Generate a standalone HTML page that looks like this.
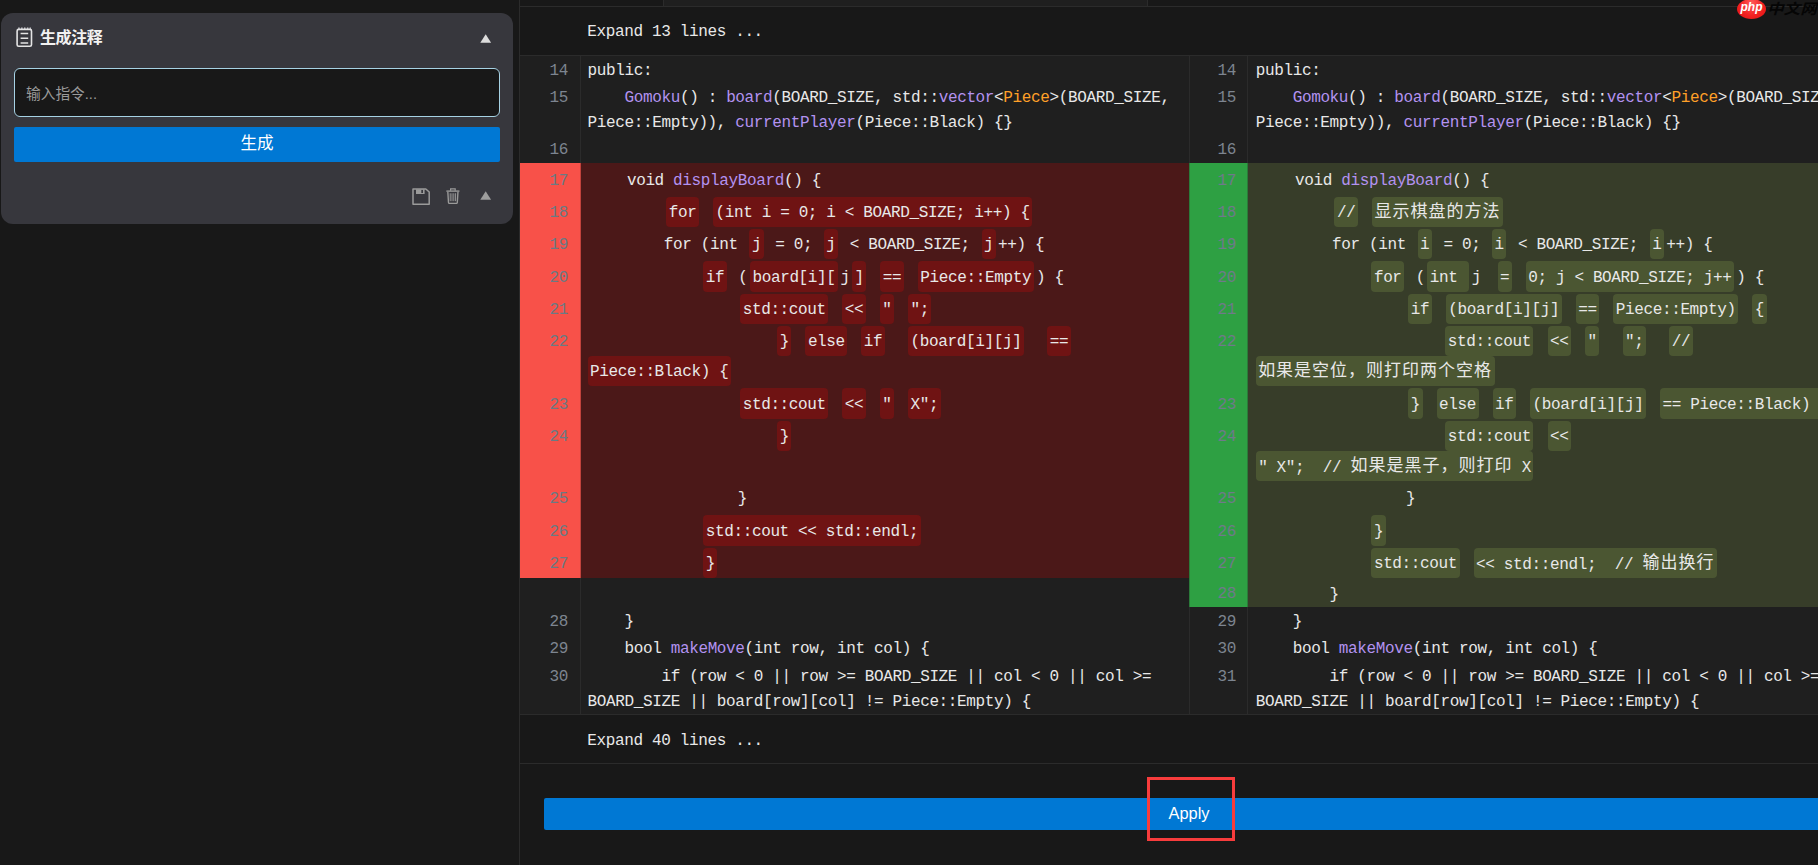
<!DOCTYPE html>
<html lang="zh-CN"><head><meta charset="utf-8"><title>diff</title>
<style>
html,body{margin:0;padding:0}
body{width:1818px;height:865px;overflow:hidden;position:relative;background:#181818;
 font-family:"Liberation Sans","Noto Sans CJK SC",sans-serif;color:#e6e6e6}
.abs{position:absolute}
/* ---------- sidebar card */
#card{position:absolute;left:1px;top:13px;width:512px;height:211px;background:#37373d;border-radius:12px}
#title{position:absolute;left:39px;top:13px;font-size:16px;line-height:24px;font-weight:bold;color:#f2f2f2;
 letter-spacing:-0.4px}
#inp{position:absolute;left:14px;top:68px;width:484px;height:47px;border:1px solid #a6d2e4;border-radius:6px;background:#181818}
#ph{position:absolute;left:26px;top:82px;font-size:14.7px;line-height:22px;color:#9a9a9a}
#gen{position:absolute;left:14px;top:127px;width:486px;height:35px;background:#0078d4;border-radius:2px;
 color:#fff;font-size:16.6px;line-height:34px;text-align:center}
/* ---------- diff */
#diff{position:absolute;left:519px;top:0;width:1338px;height:865px;border-left:1px solid #2b2b2b;
 font-family:"Liberation Mono","Noto Sans CJK SC",monospace;font-size:16.0px;letter-spacing:-0.3616px;color:#e8e8e8}
#topstrip{position:absolute;left:0;top:0;width:1338px;height:6px;border-bottom:1px solid #2b2b2b}
#topstrip i{position:absolute;left:143px;top:0;width:483px;height:6px;background:#1f1f1f;
 border-left:1px solid #2b2b2b;border-right:1px solid #2b2b2b}
.exp{position:absolute;left:0;width:1338px;white-space:pre}
.exp span{position:absolute;left:67.3px;line-height:25.2px}
#code{position:absolute;left:0;top:55px;width:1338px;border-top:1px solid #2b2b2b;border-bottom:1px solid #2b2b2b;background:#1f1f1f}
.row{position:relative;width:1338px}
.n,.vl:first-child{margin-top:var(--dy,0px)}
.g{position:absolute;top:0;height:100%;box-sizing:border-box;text-align:right;color:#7d8590}
.g.L{left:0;width:60.5px;border-right:1px solid #2b2b2b}
.g.R{left:668.6px;width:59.8px;border-left:1px solid #2b2b2b;border-right:1px solid #2b2b2b}
.g.gr{background:#f85149;border-color:#c2423c}
.g.ga{background:#2ea043;border-color:#2b7a3a}
.g.gr .n{color:#6a7a84}
.g.ga .n{color:#6e7a8a}
.n{position:absolute;right:11.5px;top:2.9px;line-height:25.2px;white-space:pre}
.n.np{top:6.225px}
.t{position:absolute;top:0;height:100%;box-sizing:border-box;padding-top:1px;white-space:pre;overflow:hidden}
.t.L{left:61px;width:607.5px;padding-left:6.5px}
.t.R{left:728.4px;width:609.6px;padding-left:7.3px}
.t.tr{background:#4b1818;padding-top:1.75px}
.t.ta{background:#373d29;padding-top:1.75px}
.vl{height:25.2px;line-height:25.2px;position:relative}
.vl:not(.pl){top:1.9px}
.vl.pl{height:30.25px;line-height:25.2px}
.c{display:inline-block;vertical-align:top;height:25.775px;padding:4.475px 2.44px 0.000px 2.44px;border-radius:4px}
.c.r{background:#6f1313}
.c.a{background:#4b5632}
.p{color:#b392f0}
.o{color:#ffa028}
.cj{font-size:17.0px;letter-spacing:1.0px;position:relative;top:-1px}
#applybar{position:absolute;left:24px;top:798px;width:1290px;height:32px;background:#0078d4;border-radius:2px;
 font-family:"Liberation Sans",sans-serif;font-size:16.4px;letter-spacing:0;line-height:31px;text-align:center;color:#fff}
#redbox{position:absolute;left:1147px;top:777px;width:82px;height:58px;border:3px solid #f73c3c}
</style></head>
<body>
<div id="card">
 <svg class="abs" style="left:15px;top:14px" width="18" height="21" viewBox="0 0 18 21">
  <rect x="1.1" y="2.4" width="14.4" height="16.9" rx="1.6" fill="none" stroke="#e4e4e4" stroke-width="1.6"/>
  <path d="M4.6 6.4h7.6M4.6 11.2h7.6M4.6 15.9h7.6" stroke="#e4e4e4" stroke-width="1.5"/>
  <path d="M2.2 1.2h1.5M5.1 1.2h1.5M8 1.2h1.5M10.9 1.2h1.5M13.6 1.2h1.3" stroke="#cfcfd4" stroke-width="1.4"/>
 </svg>
 <div id="title">生成注释</div>
 <svg class="abs" style="left:479px;top:21px" width="12" height="9" viewBox="0 0 12 9"><path d="M0.3 8.7L5.7 0.2L11.1 8.7Z" fill="#dcdcdc"/></svg>
 <div id="inp" style="left:13px;top:55px"></div>
 <div id="ph" style="left:25px;top:70px">输入指令...</div>
 <div id="gen" style="left:13px;top:114px">生成</div>
 <svg class="abs" style="left:411px;top:174.5px" width="19" height="17.4" viewBox="0 0 19 18" preserveAspectRatio="none">
  <path d="M1 1h12.8L17.2 4.2V16.8H1Z" fill="none" stroke="#9a9a9a" stroke-width="1.5" stroke-linejoin="round"/>
  <path d="M4 1.3h8.6v4.9H4Z" fill="#9a9a9a"/><rect x="9.3" y="2" width="1.7" height="3.2" fill="#37373d"/>
 </svg>
 <svg class="abs" style="left:444.8px;top:174.8px" width="13.8" height="16" viewBox="0 0 15 17" preserveAspectRatio="none">
  <path d="M0.4 3.3h14.2" stroke="#9a9a9a" stroke-width="1.5"/>
  <path d="M5 2.8V0.9h5V2.8" fill="none" stroke="#9a9a9a" stroke-width="1.3"/>
  <path d="M2 4.2l0.7 11.2q0.1 0.9 1 0.9h7.6q0.9 0 1-0.9L13 4.2" fill="none" stroke="#9a9a9a" stroke-width="1.5"/>
  <path d="M4.6 5.6v8.4M6.55 5.6v8.4M8.5 5.6v8.4M10.4 5.6v8.4" stroke="#9a9a9a" stroke-width="1"/>
 </svg>
 <svg class="abs" style="left:479px;top:178px" width="12" height="9" viewBox="0 0 12 9"><path d="M0.3 8.7L5.7 0.2L11.1 8.7Z" fill="#9d9d9d"/></svg>
</div>

<div id="diff">
 <div id="topstrip"><i></i></div>
 <div class="exp" style="top:7px;height:48px"><span style="top:13.4px">Expand 13 lines ...</span></div>
 <div id="code">
<div class="row" style="height:27.2px"><div class="g L"><span class="n">14</span></div><div class="t L"><div class="vl">public:</div></div><div class="g R"><span class="n">14</span></div><div class="t R"><div class="vl">public:</div></div></div>
<div class="row" style="height:52.4px"><div class="g L"><span class="n">15</span></div><div class="t L"><div class="vl">    <span class="p">Gomoku</span>() : <span class="p">board</span>(BOARD_SIZE, std::<span class="p">vector</span>&lt;<span class="o">Piece</span>&gt;(BOARD_SIZE,</div><div class="vl">Piece::Empty)), <span class="p">currentPlayer</span>(Piece::Black) {}</div></div><div class="g R"><span class="n">15</span></div><div class="t R"><div class="vl">    <span class="p">Gomoku</span>() : <span class="p">board</span>(BOARD_SIZE, std::<span class="p">vector</span>&lt;<span class="o">Piece</span>&gt;(BOARD_SIZE,</div><div class="vl">Piece::Empty)), <span class="p">currentPlayer</span>(Piece::Black) {}</div></div></div>
<div class="row" style="height:27.2px"><div class="g L"><span class="n">16</span></div><div class="t L"><div class="vl"></div></div><div class="g R"><span class="n">16</span></div><div class="t R"><div class="vl"></div></div></div>
<div class="row" style="height:32.25px"><div class="g L gr"><span class="n np">17</span></div><div class="t L tr"><div class="vl pl"><span class="c">    void <span class="p">displayBoard</span>() {</span></div></div><div class="g R ga"><span class="n np">17</span></div><div class="t R ta"><div class="vl pl"><span class="c">    void <span class="p">displayBoard</span>() {</span></div></div></div>
<div class="row" style="height:32.25px"><div class="g L gr"><span class="n np">18</span></div><div class="t L tr"><div class="vl pl"><span class="c">        </span><span class="c r">for</span><span class="c"> </span><span class="c r">(int i = 0; i &lt; BOARD_SIZE; i++) {</span></div></div><div class="g R ga"><span class="n np">18</span></div><div class="t R ta"><div class="vl pl"><span class="c">        </span><span class="c a">//</span><span class="c"> </span><span class="c a"><span class="cj">显示棋盘的方法</span></span></div></div></div>
<div class="row" style="height:32.25px"><div class="g L gr"><span class="n np">19</span></div><div class="t L tr"><div class="vl pl"><span class="c">        for (int </span><span class="c r">j</span><span class="c"> = 0; </span><span class="c r">j</span><span class="c"> &lt; BOARD_SIZE; </span><span class="c r">j</span><span class="c">++) {</span></div></div><div class="g R ga"><span class="n np">19</span></div><div class="t R ta"><div class="vl pl"><span class="c">        for (int </span><span class="c a">i</span><span class="c"> = 0; </span><span class="c a">i</span><span class="c"> &lt; BOARD_SIZE; </span><span class="c a">i</span><span class="c">++) {</span></div></div></div>
<div class="row" style="height:32.25px"><div class="g L gr"><span class="n np">20</span></div><div class="t L tr"><div class="vl pl"><span class="c">            </span><span class="c r">if</span><span class="c"> (</span><span class="c r">board[i][</span><span class="c">j</span><span class="c r">]</span><span class="c"> </span><span class="c r">==</span><span class="c"> </span><span class="c r">Piece::Empty</span><span class="c">) {</span></div></div><div class="g R ga"><span class="n np">20</span></div><div class="t R ta"><div class="vl pl"><span class="c">            </span><span class="c a">for</span><span class="c"> (</span><span class="c a">int </span><span class="c">j</span><span class="c"> </span><span class="c a">=</span><span class="c"> </span><span class="c a">0; j &lt; BOARD_SIZE; j++</span><span class="c">) {</span></div></div></div>
<div class="row" style="height:32.25px"><div class="g L gr"><span class="n np">21</span></div><div class="t L tr"><div class="vl pl"><span class="c">                </span><span class="c r">std::cout</span><span class="c"> </span><span class="c r">&lt;&lt;</span><span class="c"> </span><span class="c r">"</span><span class="c"> </span><span class="c r">";</span></div></div><div class="g R ga"><span class="n np">21</span></div><div class="t R ta"><div class="vl pl"><span class="c">                </span><span class="c a">if</span><span class="c"> </span><span class="c a">(board[i][j]</span><span class="c"> </span><span class="c a">==</span><span class="c"> </span><span class="c a">Piece::Empty)</span><span class="c"> </span><span class="c a">{</span></div></div></div>
<div class="row" style="height:62.5px"><div class="g L gr"><span class="n np">22</span></div><div class="t L tr"><div class="vl pl"><span class="c">                    </span><span class="c r">}</span><span class="c"> </span><span class="c r">else</span><span class="c"> </span><span class="c r">if</span><span class="c">  </span><span class="c r">(board[i][j]</span><span class="c">  </span><span class="c r">==</span><span class="c"> </span></div><div class="vl pl"><span class="c r">Piece::Black) {</span></div></div><div class="g R ga"><span class="n np">22</span></div><div class="t R ta"><div class="vl pl"><span class="c">                    </span><span class="c a">std::cout</span><span class="c"> </span><span class="c a">&lt;&lt;</span><span class="c"> </span><span class="c a">"</span><span class="c">  </span><span class="c a">";</span><span class="c">  </span><span class="c a">//</span><span class="c"> </span></div><div class="vl pl"><span class="c a"><span class="cj">如果是空位，则打印两个空格</span></span></div></div></div>
<div class="row" style="height:32.25px"><div class="g L gr"><span class="n np">23</span></div><div class="t L tr"><div class="vl pl"><span class="c">                </span><span class="c r">std::cout</span><span class="c"> </span><span class="c r">&lt;&lt;</span><span class="c"> </span><span class="c r">"</span><span class="c"> </span><span class="c r">X";</span></div></div><div class="g R ga"><span class="n np">23</span></div><div class="t R ta"><div class="vl pl"><span class="c">                </span><span class="c a">}</span><span class="c"> </span><span class="c a">else</span><span class="c"> </span><span class="c a">if</span><span class="c"> </span><span class="c a">(board[i][j]</span><span class="c"> </span><span class="c a">== Piece::Black) {</span></div></div></div>
<div class="row" style="height:62.5px"><div class="g L gr"><span class="n np">24</span></div><div class="t L tr"><div class="vl pl"><span class="c">                    </span><span class="c r">}</span></div><div class="vl pl"></div></div><div class="g R ga"><span class="n np">24</span></div><div class="t R ta"><div class="vl pl"><span class="c">                    </span><span class="c a">std::cout</span><span class="c"> </span><span class="c a">&lt;&lt;</span><span class="c"> </span></div><div class="vl pl"><span class="c a">" X";  // <span class="cj">如果是黑子，则打印</span> X</span></div></div></div>
<div class="row" style="height:32.25px"><div class="g L gr"><span class="n np">25</span></div><div class="t L tr"><div class="vl pl"><span class="c">                }</span></div></div><div class="g R ga"><span class="n np">25</span></div><div class="t R ta"><div class="vl pl"><span class="c">                }</span></div></div></div>
<div class="row" style="height:32.25px"><div class="g L gr"><span class="n np">26</span></div><div class="t L tr"><div class="vl pl"><span class="c">            </span><span class="c r">std::cout &lt;&lt; std::endl;</span></div></div><div class="g R ga"><span class="n np">26</span></div><div class="t R ta"><div class="vl pl"><span class="c">            </span><span class="c a">}</span></div></div></div>
<div class="row" style="height:32.25px"><div class="g L gr"><span class="n np">27</span></div><div class="t L tr"><div class="vl pl"><span class="c">            </span><span class="c r">}</span></div></div><div class="g R ga"><span class="n np">27</span></div><div class="t R ta"><div class="vl pl"><span class="c">            </span><span class="c a">std::cout</span><span class="c"> </span><span class="c a">&lt;&lt; std::endl;  // <span class="cj">输出换行</span></span></div></div></div>
<div class="row" style="height:28.75px;--dy:1px"><div class="g L"><span class="n"></span></div><div class="t L"></div><div class="g R ga"><span class="n">28</span></div><div class="t R ta"><div class="vl">        }</div></div></div>
<div class="row" style="height:27.2px"><div class="g L"><span class="n">28</span></div><div class="t L"><div class="vl">    }</div></div><div class="g R"><span class="n">29</span></div><div class="t R"><div class="vl">    }</div></div></div>
<div class="row" style="height:27.2px"><div class="g L"><span class="n">29</span></div><div class="t L"><div class="vl">    bool <span class="p">makeMove</span>(int row, int col) {</div></div><div class="g R"><span class="n">30</span></div><div class="t R"><div class="vl">    bool <span class="p">makeMove</span>(int row, int col) {</div></div></div>
<div class="row" style="height:52.4px;--dy:0.7px"><div class="g L"><span class="n">30</span></div><div class="t L"><div class="vl">        if (row &lt; 0 || row &gt;= BOARD_SIZE || col &lt; 0 || col &gt;=</div><div class="vl">BOARD_SIZE || board[row][col] != Piece::Empty) {</div></div><div class="g R"><span class="n">31</span></div><div class="t R"><div class="vl">        if (row &lt; 0 || row &gt;= BOARD_SIZE || col &lt; 0 || col &gt;=</div><div class="vl">BOARD_SIZE || board[row][col] != Piece::Empty) {</div></div></div>
 </div>
 <div class="exp" style="top:716px;height:47px;border-bottom:1px solid #2b2b2b"><span style="top:13.4px">Expand 40 lines ...</span></div>
 <div id="applybar">Apply</div>
</div>
<div id="redbox"></div>

<!-- watermark -->
<div class="abs" style="left:1737px;top:-1px;width:29px;height:20px;border-radius:50%;
 background:radial-gradient(ellipse at 50% 20%,#ff5a5a 0%,#f22222 55%,#e01010 100%)"></div>
<div class="abs" style="left:1739.5px;top:-3px;width:24px;font:italic bold 12px/20px 'Liberation Sans',sans-serif;color:#fff;text-align:center">php</div>
<div class="abs" style="left:1767px;top:-1.5px;font:italic bold 16.6px/24px 'Liberation Sans','Noto Sans CJK SC',sans-serif;color:#050505;white-space:nowrap;transform:scaleY(0.87);transform-origin:0 0">中文网</div>
</body></html>
